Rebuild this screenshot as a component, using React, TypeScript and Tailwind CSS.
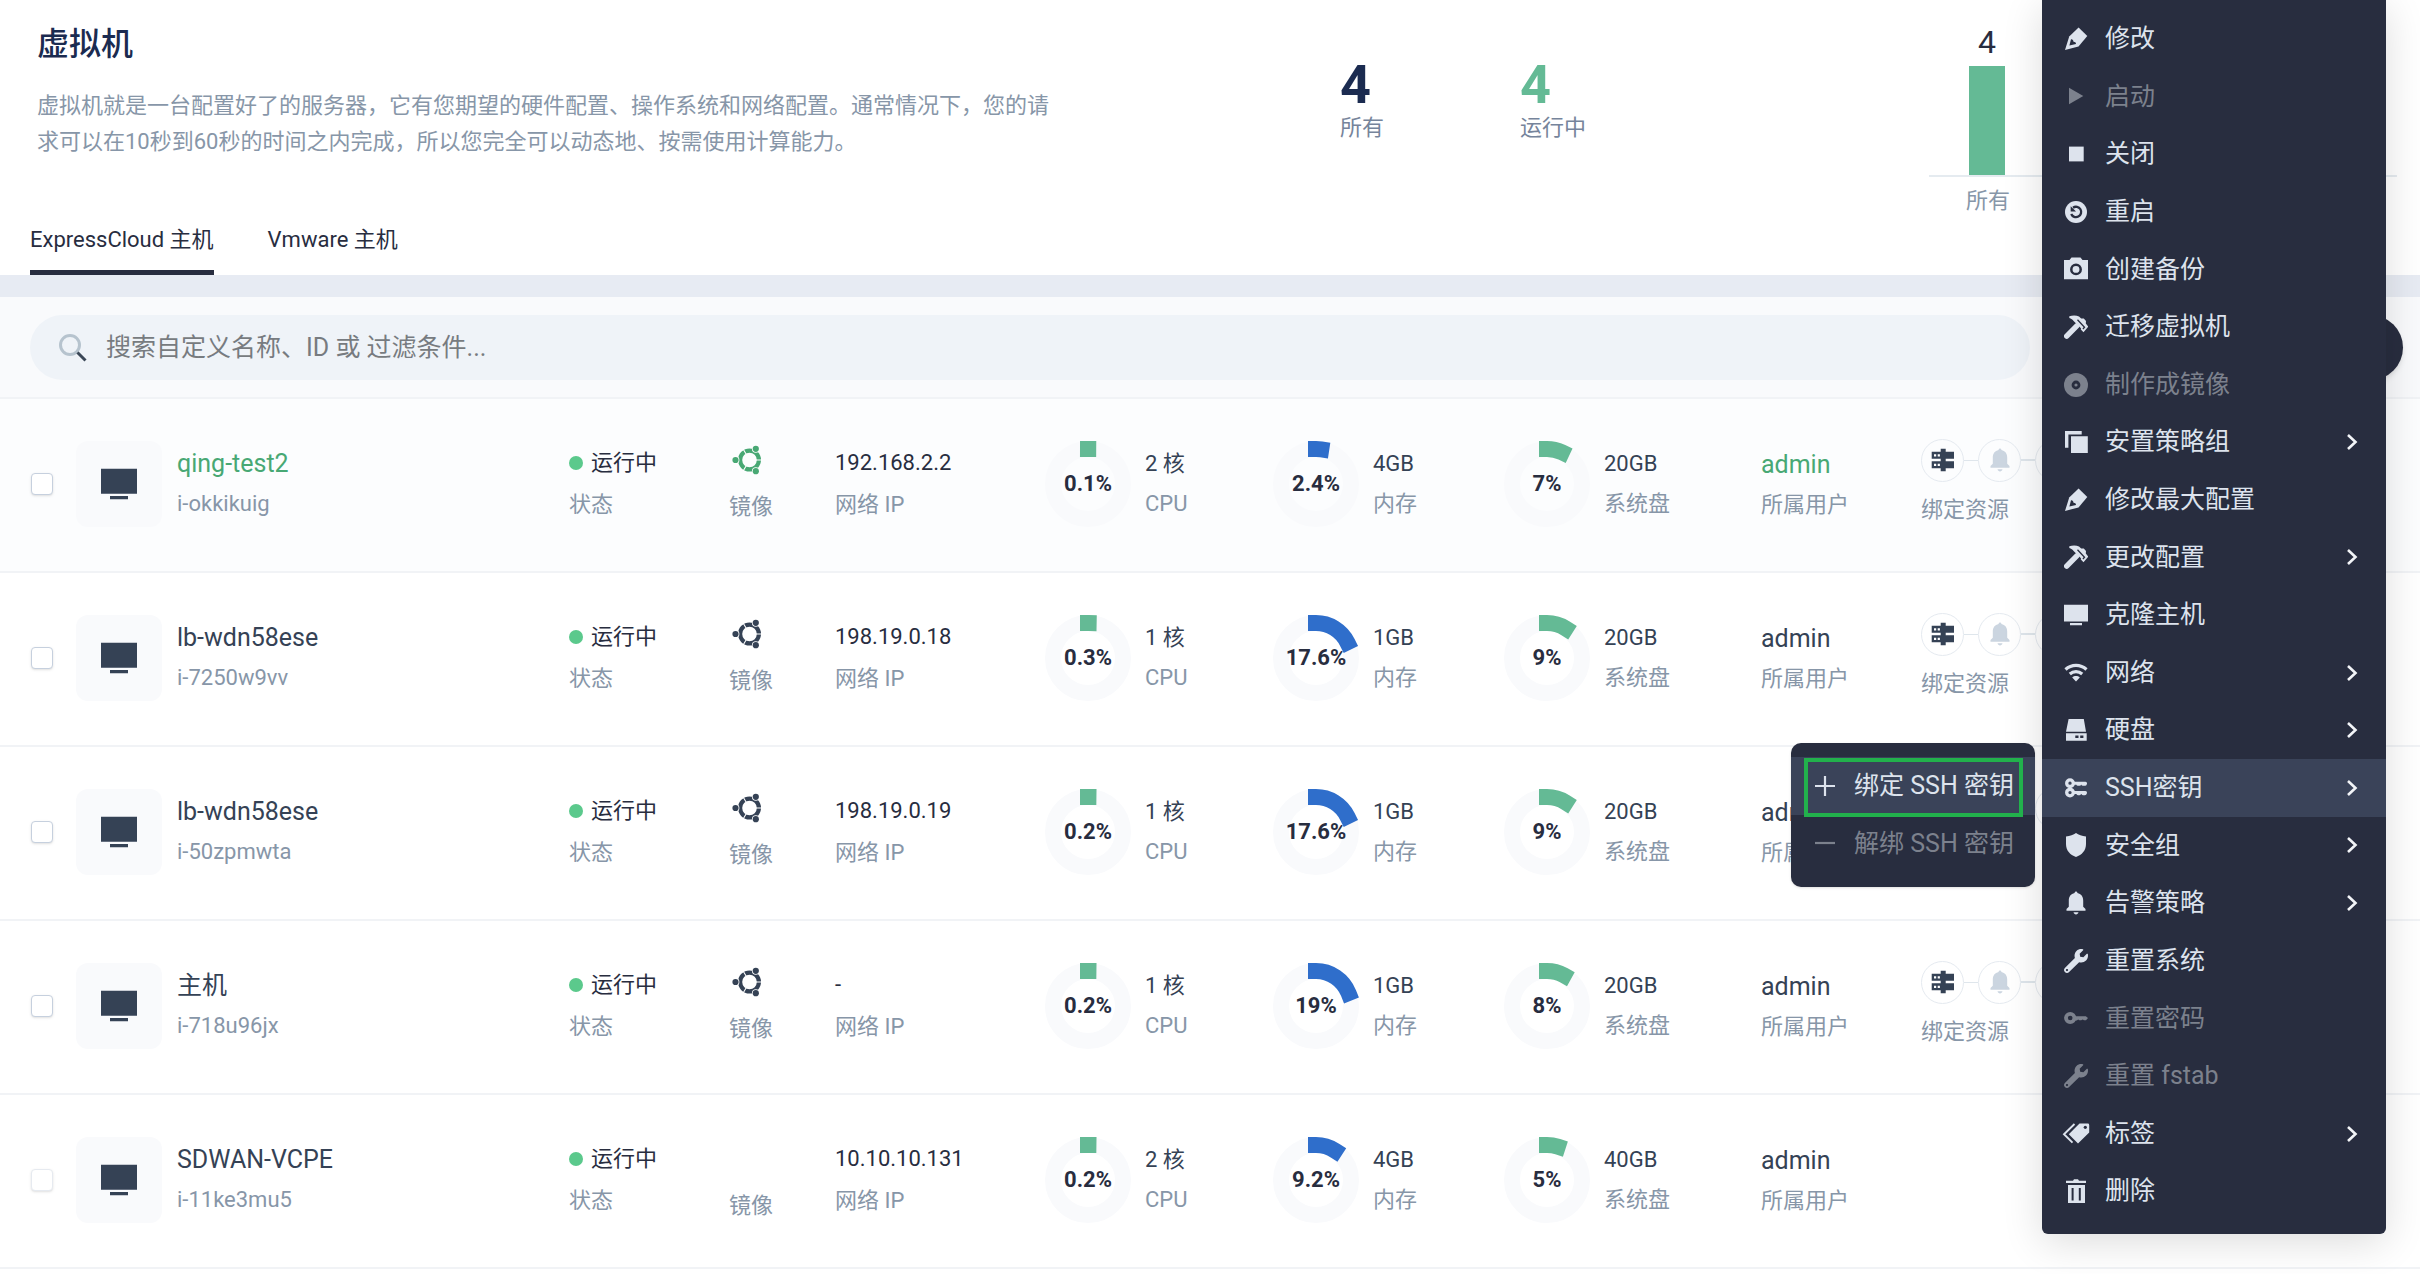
import React from 'react';
import { FaWrench } from 'react-icons/fa';

type IconProps = { className?: string };
const DARK = '#282d3f';

const Svg = ({ className = 'size-6', children, box = '0 0 24 24' }: IconProps & { children: React.ReactNode; box?: string }) => (
  <svg viewBox={box} className={`${className} shrink-0`} fill="currentColor" aria-hidden="true">
    {children}
  </svg>
);

const Pen = () => (
  <Svg>
    <path d="M1 23 5.2 9.6 14.6.4 23.3 9l-8.8 10.4z" />
    <path d="M7 12.2 5.4 18.4 12 17c0-1.4-1-2.3-2.5-2.3C9.4 13 8.500 12 7 12.200z" fill={DARK} />
  </Svg>
);
const Play = () => <Svg><path d="M5 3.700 19.300 12 5 20.300z" /></Svg>;
const Stop = () => <Svg><path d="M5 4.600h14.700v14.800H5z" /></Svg>;
const Restart = () => (
  <Svg>
    <circle cx="12" cy="12" r="11" />
    <path d="M9 7.700A5.200 5.200 0 1 1 7.200 14" fill="none" stroke={DARK} strokeWidth="2.300" />
    <path d="M6.700 6.200v5.300h5.300z" fill={DARK} />
  </Svg>
);
const Camera = () => (
  <Svg>
    <path d="M0 3h5.500L7.500.6h9L18.500 3H24v19.300H0z" />
    <circle cx="12" cy="12.400" r="4.700" fill="none" stroke={DARK} strokeWidth="2.500" />
  </Svg>
);
const Hammer = () => (
  <Svg>
    <path d="M2.700 21.100 12.800 10.800" stroke="currentColor" strokeWidth="5.400" strokeLinecap="round" />
    <path d="M5.300 1.200C8.500.4 12.500.4 15 1.400l2.200 2 2.600.2 2.200 2.400-.2 2.600 2.500 3-4.800 5.700-2.700-2.800.2-1.300-7.400-7.200C8.800 4.500 7 3.400 5.300 2.900z" />
    <path d="m13.500 4.800 7 7.400-1.600 1.800" fill="none" stroke={DARK} strokeWidth="1.300" />
  </Svg>
);
const Disc = () => (
  <Svg>
    <circle cx="12" cy="12" r="12" />
    <circle cx="12" cy="12" r="3" fill="none" stroke={DARK} strokeWidth="2.800" />
  </Svg>
);
const Copy = () => (
  <Svg><path d="M1 1h16.700v3.400H4.400v13.300H1zM7 6.300h16.800v16.800H7z" /></Svg>
);
const Monitor = ({ className }: IconProps) => (
  <Svg className={className}><path d="M0 1.800h24v16.700H0zM6 20h12v2.200H6z" /></Svg>
);
const Wifi = () => (
  <Svg>
    <path d="M1.500 8.500C7.500 2.900 16.500 2.900 22.500 8.500M5.800 13c3.600-3.200 8.800-3.200 12.400 0" fill="none" stroke="currentColor" strokeWidth="3.200" />
    <path d="M8.200 16.500c2.200-1.900 5.400-1.900 7.600 0L12 20.500z" />
  </Svg>
);
const Drive = () => (
  <Svg>
    <path d="M4.600 1h15.200l2.200 12.800H2zM2 15.300h20.700v7.500H2z" />
    <path d="M11.300 17.600h3.200v2.300h-3.200zM16.200 17.600h3.200v2.300h-3.200z" fill={DARK} />
  </Svg>
);
const Keys = () => (
  <Svg>
    {[7.200, 16.600].map((y) => (
      <g key={y} fill="none" stroke="currentColor">
        <circle cx="6" cy={y} r="3.300" strokeWidth="3.300" />
        <path d={`M9.500 ${y}H21.500`} strokeWidth="3" strokeLinecap="round" />
        <path d={`M14 ${y + 1}h1.500M19 ${y + 1}h2`} strokeWidth="3.200" strokeLinecap="round" />
      </g>
    ))}
  </Svg>
);
const Shield = () => (
  <Svg><path d="M12 0c2.500 1.800 6 3 10 3.600V11c0 6.500-4 10.800-10 13C6 21.800 2 17.500 2 11V3.600C6 3 9.500 1.800 12 0z" /></Svg>
);
const Bell = ({ className }: IconProps) => (
  <Svg className={className}>
    <path d="M10.600 2c0-2 2.800-2 2.800 0 3.800.8 5.800 3.700 5.800 7.500v6.300l2.300 2.200v1.700H2.500V18l2.300-2.200V9.500C4.800 5.700 6.800 2.800 10.600 2zM9.500 21.200h5c-.4 1.400-1.200 2.200-2.500 2.200s-2.100-.8-2.500-2.200z" />
  </Svg>
);
const Wrench = () => <FaWrench className="size-6 shrink-0" aria-hidden="true" />;
const Key = () => (
  <Svg>
    <circle cx="6.200" cy="12" r="4.200" fill="none" stroke="currentColor" strokeWidth="3.800" />
    <path d="M10.500 10.200h11.300l2.200 1.800-2 2.300h-2l-1.300-.9-1.500.9h-1.800l-1.200-.9-1.500 1.200h-2.200z" />
  </Svg>
);
const Tags = () => (
  <Svg className="h-6 w-7" box="0 0 28 24">
    <path d="M17.500 1.500h8.300a1.400 1.400 0 0 1 1.400 1.400V10.500L16 21.500 6.800 12.300z" />
    <circle cx="23.300" cy="5.300" r="1.600" fill={DARK} />
    <path d="M12.500 2 2 12.200l8.500 8.500" fill="none" stroke="currentColor" strokeWidth="1.900" />
  </Svg>
);
const Trash = () => (
  <Svg>
    <path d="M2 1.800h7L10 .3h4l1 1.500h7V4H2zM4 6h17v18.300H4z" />
    <path d="M7.600 9h2v12.500h-2zM14.800 9h2v12.500h-2z" fill={DARK} />
  </Svg>
);
const Server = () => (
  <Svg>
    <path d="M.7 3.700h22.300v7H.7zM.7 13.300h22.300v7H.7zM9.700.8h5v22.400h-5z" />
    <path d="M3 6.200h2.200v2.200H3zM6.700 6.200h2.200v2.200H6.700zM3 15.700h2.200v2.200H3zM6.700 15.700h2.200v2.200H6.700z" fill="#fff" />
  </Svg>
);
const Ubuntu = () => (
  <Svg className="size-[30px]" box="0 0 30 30">
    <circle cx="17.500" cy="15" r="9.400" fill="none" stroke="currentColor" strokeWidth="4.200" />
    <path d="M24 15h6M14.200 9.300 11 3.800M14.200 20.700 11 26.200" stroke="#fff" strokeWidth="1.100" />
    {[[3.500, 15], [23.800, 3.800], [23.800, 26.200]].map(([x, y]) => (
      <circle key={`${x}-${y}`} cx={x} cy={y} r="3.100" stroke="#fff" strokeWidth="1.600" paintOrder="stroke" />
    ))}
  </Svg>
);
const Chevron = () => (
  <svg viewBox="0 0 12 18" className="h-[18px] w-3" fill="none" stroke="#f3f5f8" strokeWidth="2.600" aria-hidden="true">
    <path d="m2 2 7.500 7L2 16" />
  </svg>
);

type Item = { label: string; icon: () => React.ReactElement; disabled?: boolean; sub?: boolean };
const MENU: Item[] = [
  { label: '修改', icon: Pen },
  { label: '启动', icon: Play, disabled: true },
  { label: '关闭', icon: Stop },
  { label: '重启', icon: Restart },
  { label: '创建备份', icon: Camera },
  { label: '迁移虚拟机', icon: Hammer },
  { label: '制作成镜像', icon: Disc, disabled: true },
  { label: '安置策略组', icon: Copy, sub: true },
  { label: '修改最大配置', icon: Pen },
  { label: '更改配置', icon: Hammer, sub: true },
  { label: '克隆主机', icon: () => <Monitor /> },
  { label: '网络', icon: Wifi, sub: true },
  { label: '硬盘', icon: Drive, sub: true },
  { label: 'SSH密钥', icon: Keys, sub: true },
  { label: '安全组', icon: Shield, sub: true },
  { label: '告警策略', icon: () => <Bell />, sub: true },
  { label: '重置系统', icon: Wrench },
  { label: '重置密码', icon: Key, disabled: true },
  { label: '重置 fstab', icon: Wrench, disabled: true },
  { label: '标签', icon: Tags, sub: true },
  { label: '删除', icon: Trash },
];

type Vm = {
  name: string; id: string; ip: string; cores: string; cpu: number; mem: string; memUse: number;
  disk: string; diskUse: number; active?: boolean; bare?: boolean;
};
const VMS: Vm[] = [
  { name: 'qing-test2', id: 'i-okkikuig', ip: '192.168.2.2', cores: '2 核', cpu: 0.1, mem: '4GB', memUse: 2.4, disk: '20GB', diskUse: 7, active: true },
  { name: 'lb-wdn58ese', id: 'i-7250w9vv', ip: '198.19.0.18', cores: '1 核', cpu: 0.3, mem: '1GB', memUse: 17.6, disk: '20GB', diskUse: 9 },
  { name: 'lb-wdn58ese', id: 'i-50zpmwta', ip: '198.19.0.19', cores: '1 核', cpu: 0.2, mem: '1GB', memUse: 17.6, disk: '20GB', diskUse: 9 },
  { name: '主机', id: 'i-718u96jx', ip: '-', cores: '1 核', cpu: 0.2, mem: '1GB', memUse: 19, disk: '20GB', diskUse: 8 },
  { name: 'SDWAN-VCPE', id: 'i-11ke3mu5', ip: '10.10.10.131', cores: '2 核', cpu: 0.2, mem: '4GB', memUse: 9.2, disk: '40GB', diskUse: 5, bare: true },
];

const Donut = ({ value, color }: { value: number; color: string }) => (
  <div className="grid size-[86px] shrink-0 place-items-center">
    <svg viewBox="0 0 86 86" className="col-start-1 row-start-1 size-[86px]" fill="none" aria-hidden="true">
      <circle cx="43" cy="43" r="35" stroke="#f9fafc" strokeWidth="16" />
      <circle cx="43" cy="43" r="35" stroke={color} strokeWidth="16" strokeLinecap="square" pathLength="100"
        strokeDasharray={`${value} 200`} transform="rotate(-90 43 43)" />
    </svg>
    <span className="z-1 col-start-1 row-start-1 font-bold text-[#282d3f]">{value}%</span>
  </div>
);

const Usage = ({ value, color, amount, label }: { value: number; color: string; amount: string; label: string }) => (
  <div className="flex items-center gap-[14px]">
    <Donut value={value} color={color} />
    <div className="text-[#354255]">
      <p>{amount}</p>
      <p className="text-[#8796a8]">{label}</p>
    </div>
  </div>
);

const Row = ({ vm }: { vm: Vm }) => (
  <li className={`grid h-[174px] grid-cols-[569fr_160fr_106fr_210fr_228fr_231fr_257fr_160fr_499fr] items-center border-b-2 border-[#f1f3f6] pb-0.5 leading-10 whitespace-nowrap ${vm.active ? 'bg-[#fcfdfe]' : 'bg-white'}`}>
    <div className="flex items-center pl-[31px]">
      <input type="checkbox" aria-label={vm.name}
        className={`size-[22px] appearance-none rounded-sm border bg-white shadow-sm ${vm.bare ? 'border-[#e6eaf0]' : 'border-[#c6d0de]'}`} />
      <div className="ml-[23px] grid size-[86px] place-items-center rounded-xl bg-[#f9fafc] text-[#354255]">
        <Monitor className="size-9" />
      </div>
      <div className="ml-[15px]">
        <a href="#vm" className={`block text-[25px] ${vm.active ? 'text-[#48a874]' : 'text-[#354255]'}`}>{vm.name}</a>
        <p className="text-[#8796a8]">{vm.id}</p>
      </div>
    </div>
    <div className="leading-[42px]">
      <p className="flex items-center gap-2 text-[#282d3f]">
        <span className="size-[14px] rounded-full bg-[#5bc98c]" />运行中
      </p>
      <p className="text-[#8796a8]">状态</p>
    </div>
    <div className="pt-1">
      <div className={`ml-[3px] ${vm.bare ? 'h-9' : 'h-[30px]'} ${vm.active ? 'text-[#48a874]' : 'text-[#354255]'}`}>{!vm.bare && <Ubuntu />}</div>
      <p className="mt-3 text-[#8796a8]">镜像</p>
    </div>
    <div className="leading-[42px]">
      <p className="text-[#282d3f]">{vm.ip}</p>
      <p className="text-[#8796a8]">网络 IP</p>
    </div>
    <Usage value={vm.cpu} color="#64ba95" amount={vm.cores} label="CPU" />
    <Usage value={vm.memUse} color="#2f6ecb" amount={vm.mem} label="内存" />
    <Usage value={vm.diskUse} color="#64ba95" amount={vm.disk} label="系统盘" />
    <div className="pt-0.5">
      <p className={`text-[25px] ${vm.active ? 'text-[#48a874]' : 'text-[#354255]'}`}>admin</p>
      <p className="text-[#8796a8]">所属用户</p>
    </div>
    {vm.bare ? <div /> : (
      <div>
        <div className="flex items-center">
          <span className="grid size-[43px] place-items-center rounded-full border border-[#e5eaf0] text-[#354255]"><Server /></span>
          <span className="h-px w-[14px] bg-[#dfe6ec]" />
          <span className="grid size-[43px] place-items-center rounded-full border border-[#e5eaf0] text-[#cbd5e0]"><Bell /></span>
          <span className="h-0.5 w-[14px] bg-[#dfe6ec]" />
          <span className="size-[43px] rounded-full border border-[#e5eaf0]" />
        </div>
        <p className="mt-2 text-[#8796a8]">绑定资源</p>
      </div>
    )}
  </li>
);

const SshMenu = () => (
  <div className="absolute -top-4 right-full mr-[7px] w-[244px] rounded-[10px] bg-[#282d3f] py-[14px] shadow">
    <button type="button" className="relative flex h-[58px] w-full items-center gap-[19px] bg-[#3a4359] pl-6 text-[#dde3ed]">
      <svg viewBox="0 0 20 20" className="size-5" stroke="currentColor" strokeWidth="2.200" aria-hidden="true"><path d="M0 10h20M10 0v20" /></svg>
      绑定 SSH 密钥
      <span className="absolute -bottom-0.5 left-[13px] right-3 top-px border-4 border-[#22b14c]" />
    </button>
    <button type="button" disabled className="flex h-[58px] w-full items-center gap-[19px] pl-6 text-[#7c818d]">
      <svg viewBox="0 0 20 20" className="size-5" stroke="currentColor" strokeWidth="2.200" aria-hidden="true"><path d="M0 9h20" /></svg>
      解绑 SSH 密钥
    </button>
  </div>
);

export default function App() {
  return (
    <div className="relative min-h-screen overflow-hidden bg-white font-['Roboto','Noto_Sans_CJK_SC',sans-serif] text-[22px]">
      <header className="grid h-[215px] grid-cols-[1340fr_180fr_409fr_491fr]">
        <div className="pl-[37px] pt-[21px]">
          <h1 className="text-[32px] font-medium leading-[46px] text-[#1b2b50]">虚拟机</h1>
          <p className="mt-[21px] max-w-[1024px] leading-9 text-[#8796a8]">
            虚拟机就是一台配置好了的服务器，它有您期望的硬件配置、操作系统和网络配置。通常情况下，您的请求可以在10秒到60秒的时间之内完成，所以您完全可以动态地、按需使用计算能力。
          </p>
        </div>
        <div className="pt-[55px] text-[#76849b]">
          <p className="text-[54px] font-bold leading-[60px] text-[#1b2b50]">4</p>
          <p className="leading-[26px]">所有</p>
        </div>
        <div className="pt-[55px] text-[#76849b]">
          <p className="text-[54px] font-bold leading-[60px] text-[#64ba95]">4</p>
          <p className="leading-[26px]">运行中</p>
        </div>
        <div className="pr-[23px] pt-[22px]">
          <div className="border-b-2 border-[#e5ebf0] pl-10">
            <p className="w-9 text-center text-[32px] leading-10 text-[#282d3f]">4</p>
            <div className="mt-1 h-[109px] w-9 bg-[#64ba95]" />
          </div>
          <p className="pl-[37px] pt-1 leading-10 text-[#8796a8]">所有</p>
        </div>
      </header>
      <nav className="flex h-[60px] gap-[54px] pl-[30px] text-[#282d3f]">
        <button type="button" className="h-full border-b-5 border-[#282d3f] pb-1.5 leading-8">ExpressCloud 主机</button>
        <button type="button" className="h-full border-b-5 border-transparent pb-1.5 leading-8">Vmware 主机</button>
      </nav>
      <div className="h-[22px] bg-[#e7ebf3]" />
      <div className="flex border-b-2 border-[#f1f3f6] bg-[#f9fafc] pb-[17px] pl-[30px] pr-[17px] pt-[18px]">
        <label className="flex h-[65px] flex-1 items-center gap-[19px] rounded-full bg-[#eff3f8] pl-[29px]">
          <svg viewBox="0 0 28 28" className="size-7" fill="none" aria-hidden="true">
            <circle cx="11" cy="11" r="9.500" stroke="#b6c3ce" strokeWidth="3" />
            <path d="m18.500 18.500 8 8" stroke="#3b4757" strokeWidth="3" />
          </svg>
          <input type="text" aria-label="搜索" placeholder="搜索自定义名称、ID 或 过滤条件..." className="flex-1 bg-transparent text-[25px] outline-none placeholder:text-[#777b80]" />
        </label>
        <button type="button" aria-label="操作" className="ml-10 w-[333px] rounded-full bg-[#282d3f] shadow-md" />
      </div>
      <ul>{VMS.map((vm) => <Row key={vm.id} vm={vm} />)}</ul>

      <div className="absolute right-[34px] top-0 z-10 w-[344px] rounded-b-md bg-[#282d3f] pb-[14px] pt-[10px] text-[25px] shadow-[0_8px_40px_rgba(0,0,0,0.14)]">
        <ul className="grid h-[1210px] auto-rows-fr">
          {MENU.map(({ label, icon: Icon, disabled, sub }) => {
            const open = label === 'SSH密钥';
            return (
              <li key={label} className={`relative ${open ? 'bg-[#3a4359]' : ''}`}>
                <button type="button" disabled={disabled} className={`flex size-full items-center pl-5 pr-7 ${disabled ? 'text-[#7c818d]' : 'text-[#dde3ed]'}`}>
                  <span className="mr-4 flex w-[27px] justify-center"><Icon /></span>
                  <span className="flex-1 text-left">{label}</span>
                  {sub && <Chevron />}
                </button>
                {open && <SshMenu />}
              </li>
            );
          })}
        </ul>
      </div>
    </div>
  );
}
